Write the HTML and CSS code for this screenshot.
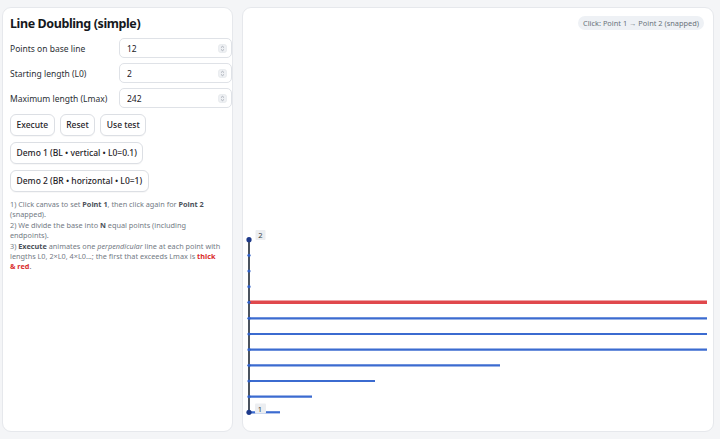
FILE: index.html
```html
<!DOCTYPE html>
<html>
<head>
<meta charset="utf-8">
<link rel="stylesheet" href="styles.css">
</head>
<body>
<div class="app">
  <section class="panel side">
    <h1 class="title">Line Doubling (simple)</h1>
    <div class="field">
      <label class="label">Points on base line</label>
      <div class="num"><input class="num-input" type="text" value="12"><svg class="spin" viewBox="0 0 9 9"><rect x="0.5" y="0.5" width="8" height="8" rx="2" fill="#eef0f3" stroke="#e2e5ea" stroke-width="0.6"/><path d="M3 3.6 L4.5 2.3 L6 3.6 M3 5.4 L4.5 6.7 L6 5.4" fill="none" stroke="#9aa1ab" stroke-width="0.8"/></svg></div>
    </div>
    <div class="field">
      <label class="label">Starting length (L0)</label>
      <div class="num"><input class="num-input" type="text" value="2"><svg class="spin" viewBox="0 0 9 9"><rect x="0.5" y="0.5" width="8" height="8" rx="2" fill="#eef0f3" stroke="#e2e5ea" stroke-width="0.6"/><path d="M3 3.6 L4.5 2.3 L6 3.6 M3 5.4 L4.5 6.7 L6 5.4" fill="none" stroke="#9aa1ab" stroke-width="0.8"/></svg></div>
    </div>
    <div class="field">
      <label class="label">Maximum length (Lmax)</label>
      <div class="num"><input class="num-input" type="text" value="242"><svg class="spin" viewBox="0 0 9 9"><rect x="0.5" y="0.5" width="8" height="8" rx="2" fill="#eef0f3" stroke="#e2e5ea" stroke-width="0.6"/><path d="M3 3.6 L4.5 2.3 L6 3.6 M3 5.4 L4.5 6.7 L6 5.4" fill="none" stroke="#9aa1ab" stroke-width="0.8"/></svg></div>
    </div>
    <div class="btn-row">
      <button class="btn">Execute</button>
      <button class="btn">Reset</button>
      <button class="btn">Use test</button>
    </div>
    <div class="btn-row"><button class="btn">Demo 1 (BL • vertical • L0=0.1)</button></div>
    <div class="btn-row"><button class="btn">Demo 2 (BR • horizontal • L0=1)</button></div>
    <p class="help">
      1) Click canvas to set <b>Point 1</b>, then click again for <b>Point 2</b> (snapped).<br>
      2) We divide the base into <b>N</b> equal points (including endpoints).<br>
      3) <b>Execute</b> animates one <i>perpendicular</i> line at each point with lengths L0, 2×L0, 4×L0...; the first that exceeds Lmax is <b class="red">thick <span class="nowrap">&amp; red</span></b>.
    </p>
  </section>
  <section class="panel stage">
    <div class="badge">Click: Point 1 → Point 2 (snapped)</div>
    <svg class="canvas" width="471" height="423" viewBox="0 0 471 423">
      <g stroke-linecap="butt">
        <line x1="6" y1="404.3" x2="37" y2="404.3" stroke="#3b6bd0" stroke-width="2.2"/>
        <line x1="6" y1="388.7" x2="69" y2="388.7" stroke="#3b6bd0" stroke-width="2.2"/>
        <line x1="6" y1="373" x2="132" y2="373" stroke="#3b6bd0" stroke-width="2.2"/>
        <line x1="6" y1="357.3" x2="257" y2="357.3" stroke="#3b6bd0" stroke-width="2.2"/>
        <line x1="6" y1="341.7" x2="464" y2="341.7" stroke="#3b6bd0" stroke-width="2.2"/>
        <line x1="6" y1="326" x2="464" y2="326" stroke="#3b6bd0" stroke-width="2.2"/>
        <line x1="6" y1="310.3" x2="464" y2="310.3" stroke="#3b6bd0" stroke-width="2.2"/>
        <line x1="6" y1="294.3" x2="464" y2="294.3" stroke="#e0484c" stroke-width="3.6"/>
      </g>
      <line x1="6" y1="231.7" x2="6" y2="404.3" stroke="#1f2937" stroke-width="1.6"/>
      <g fill="#2f5fc4">
        <circle cx="6" cy="247.3" r="1.6"/>
        <circle cx="6" cy="263" r="1.6"/>
        <circle cx="6" cy="278.7" r="1.6"/>
        <circle cx="6" cy="294.3" r="1.6"/>
        <circle cx="6" cy="310.3" r="1.6"/>
        <circle cx="6" cy="326" r="1.6"/>
        <circle cx="6" cy="341.7" r="1.6"/>
        <circle cx="6" cy="357.3" r="1.6"/>
        <circle cx="6" cy="373" r="1.6"/>
        <circle cx="6" cy="388.7" r="1.6"/>
      </g>
      <circle cx="6" cy="231.7" r="2.6" fill="#1e3a8a"/>
      <circle cx="6" cy="404.3" r="2.6" fill="#1e3a8a"/>
      <rect x="12.5" y="222" width="10" height="10" rx="1" fill="#eceef1"/>
      <text x="17.5" y="230.2" class="pt-label" text-anchor="middle">2</text>
      <rect x="12" y="395.5" width="11" height="10" rx="1" fill="#eceef1"/>
      <text x="17" y="403.7" class="pt-label" text-anchor="middle">1</text>
    </svg>
  </section>
</div>
</body>
</html>
```

FILE: styles.css
```css
* { box-sizing: border-box; }
html, body { margin: 0; padding: 0; }
body {
  background: #f4f5f7;
  font-family: "Noto Sans", "Open Sans", sans-serif;
  color: #1f2328;
  width: 720px;
  height: 439px;
  overflow: hidden;
}
.app {
  display: grid;
  grid-template-columns: 231px 1fr;
  gap: 9px;
  padding: 7px 6px 7px 2px;
  height: 439px;
}
.panel {
  background: #fff;
  border: 1px solid #e6e8ec;
  border-radius: 9px;
}
.side {
  padding: 6px 0 8px 7px;
  display: flex;
  flex-direction: column;
  min-width: 0;
}
.title {
  font-size: 12.5px;
  font-weight: 700;
  letter-spacing: -0.4px;
  line-height: 20px;
  margin: 0 0 4px 0;
  color: #15181c;
}
.field {
  display: grid;
  grid-template-columns: 109px minmax(0, 1fr);
  align-items: center;
  margin-bottom: 5px;
}
.label {
  font-size: 8.5px;
  color: #2b2f35;
}
.num {
  display: flex;
  align-items: center;
  min-width: 0;
  height: 20px;
  border: 1px solid #dfe2e7;
  border-radius: 5px;
  padding: 0 4px 0 7px;
  background: #fff;
}
.num-input {
  flex: 1;
  width: 0;
  min-width: 0;
  border: 0;
  outline: 0;
  font: inherit;
  font-size: 8.5px;
  color: #1f2328;
  padding: 0;
  background: transparent;
}
.spin { width: 9px; height: 9px; display: block; flex: none; }
.btn-row {
  display: flex;
  gap: 5px;
  margin-top: 1px;
  margin-bottom: 5px;
}
.btn {
  font-family: inherit;
  font-size: 8.5px;
  font-weight: 500;
  color: #1f2328;
  background: #fff;
  border: 1px solid #dcdfe4;
  border-radius: 6px;
  height: 22px;
  padding: 0 5.5px;
  line-height: 20px;
  box-shadow: 0 1px 1px rgba(0,0,0,0.03);
}
.help {
  margin: 2px 0 0 0;
  font-size: 7.3px;
  line-height: 10.4px;
  color: #737a84;
  padding-right: 9px;
}
.help b { color: #4b5159; font-weight: 700; }
.help b.red { color: #d92d2d; }
.nowrap { white-space: nowrap; }
.stage {
  position: relative;
  overflow: hidden;
}
.canvas { display: block; }
.badge {
  position: absolute;
  top: 8px;
  right: 9px;
  background: #eef1f5;
  color: #6a717b;
  font-size: 7.4px;
  line-height: 14px;
  padding: 0 5px;
  border-radius: 7px;
}
.pt-label {
  font-family: "Noto Sans", sans-serif;
  font-size: 7.6px;
  fill: #3a3f46;
}
```
